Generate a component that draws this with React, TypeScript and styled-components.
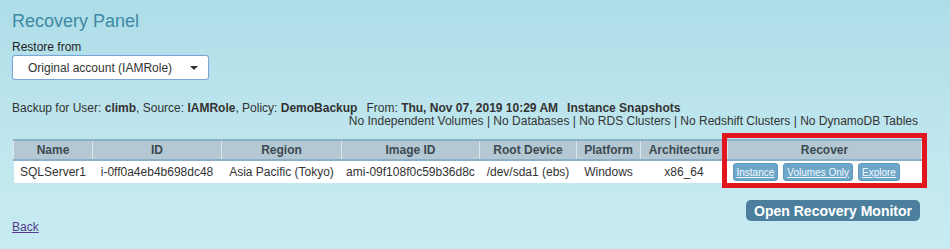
import React from 'react';
import styled, { createGlobalStyle } from 'styled-components';

const GlobalStyle = createGlobalStyle`
  html, body {
    margin: 0;
    padding: 0;
  }
  body {
    font-family: "Liberation Sans", Arial, sans-serif;
    color: #333;
    background: linear-gradient(180deg, #aedde8 0%, #bfe6ee 55%, #c8ebf2 100%);
    min-height: 249px;
  }
`;

const Page = styled.div`
  padding: 10px 29px 0 12px;
  height: 249px;
  box-sizing: border-box;
`;

const Title = styled.h1`
  margin: 0;
  font-size: 18px;
  line-height: 22px;
  font-weight: normal;
  color: #3c8aa4;
`;

const Label = styled.div`
  margin-top: 8px;
  font-size: 12px;
  line-height: 14px;
  color: #222;
`;

const Select = styled.div`
  margin-top: 1px;
  width: 197px;
  height: 25px;
  box-sizing: border-box;
  display: flex;
  align-items: center;
  justify-content: space-between;
  padding: 0 10px 0 15px;
  background: #fff;
  border: 1px solid #7da4d6;
  border-radius: 3px;
  box-shadow: 0 0 1px #9dc0ea;
  font-size: 12px;
  color: #333;
`;

const Caret = styled.span`
  width: 0;
  height: 0;
  border-left: 4px solid transparent;
  border-right: 4px solid transparent;
  border-top: 4px solid #333;
`;

const Info = styled.div`
  margin-top: 22px;
  font-size: 12px;
  line-height: 13px;
  color: #333;
`;

const InfoLine = styled.div<{ $right?: boolean }>`
  text-align: ${({ $right }) => ($right ? 'right' : 'left')};
  padding-right: ${({ $right }) => ($right ? '3px' : '0')};
  white-space: nowrap;
`;

const Gap = styled.span`
  display: inline-block;
  width: 9px;
`;

const Table = styled.table`
  margin-top: 11px;
  margin-left: 1px;
  width: 908px;
  table-layout: fixed;
  border-collapse: collapse;
  font-size: 12px;
`;

const Th = styled.th`
  position: relative;
  height: 18px;
  padding: 0;
  background: #b3c8d3;
  border-top: 2px solid #8aafc9;
  border-bottom: 2px solid #8aafc9;
  border-left: 1px solid #d9e7ee;
  border-right: 1px solid #d9e7ee;
  color: #3d4a52;
  font-weight: bold;
  text-align: center;
`;

const Td = styled.td<{ $left?: boolean }>`
  height: 22px;
  padding: 0 ${({ $left }) => ($left ? '5px' : '0')};
  background: #fff;
  text-align: ${({ $left }) => ($left ? 'left' : 'center')};
  color: #333;
  white-space: nowrap;
`;

const Highlight = styled.div`
  position: absolute;
  left: -6px;
  right: -6px;
  top: -8px;
  bottom: -29px;
  border: 5px solid #e3161d;
  pointer-events: none;
`;

const Actions = styled.div`
  display: flex;
  gap: 5px;
`;

const SmallButton = styled.a`
  display: inline-flex;
  align-items: center;
  height: 16px;
  padding: 0 3px;
  border: 1px solid #5e98bf;
  border-radius: 3px;
  background: #6ea6c9;
  color: #f4fbff;
  font-size: 10px;
  text-decoration: underline;
  cursor: pointer;
`;

const Footer = styled.div`
  display: flex;
  justify-content: flex-end;
  margin-top: 17px;
  padding-right: 1px;
`;

const MonitorButton = styled.button`
  height: 21px;
  padding: 0 8px;
  border: none;
  border-radius: 5px;
  background: #4b7f9d;
  color: #fff;
  font-family: "Liberation Sans", Arial, sans-serif;
  font-size: 14px;
  font-weight: bold;
  cursor: pointer;
`;

const BackLink = styled.a`
  display: block;
  width: max-content;
  margin-top: -1px;
  font-size: 12px;
  line-height: 14px;
  color: #553c8e;
  text-decoration: underline;
`;

const columns = [
  { name: 'Name', width: 79 },
  { name: 'ID', width: 129 },
  { name: 'Region', width: 120 },
  { name: 'Image ID', width: 138 },
  { name: 'Root Device', width: 97 },
  { name: 'Platform', width: 64 },
  { name: 'Architecture', width: 87 },
  { name: 'Recover', width: 194 },
];

const row = [
  'SQLServer1',
  'i-0ff0a4eb4b698dc48',
  'Asia Pacific (Tokyo)',
  'ami-09f108f0c59b36d8c',
  '/dev/sda1 (ebs)',
  'Windows',
  'x86_64',
];

const App = () => (
  <>
    <GlobalStyle />
    <Page>
      <Title>Recovery Panel</Title>
      <Label>Restore from</Label>
      <Select>
        <span>Original account (IAMRole)</span>
        <Caret />
      </Select>
      <Info>
        <InfoLine>
          Backup for User: <b>climb</b>, Source: <b>IAMRole</b>, Policy: <b>DemoBackup</b>
          <Gap />
          From: <b>Thu, Nov 07, 2019 10:29 AM</b>
          <Gap />
          <b>Instance Snapshots</b>
        </InfoLine>
        <InfoLine $right>
          No Independent Volumes | No Databases | No RDS Clusters | No Redshift Clusters | No DynamoDB Tables
        </InfoLine>
      </Info>
      <Table>
        <colgroup>
          {columns.map((c) => (
            <col key={c.name} style={{ width: c.width }} />
          ))}
        </colgroup>
        <thead>
          <tr>
            {columns.map((c) => (
              <Th key={c.name}>
                {c.name}
                {c.name === 'Recover' && <Highlight />}
              </Th>
            ))}
          </tr>
        </thead>
        <tbody>
          <tr>
            {row.map((v) => (
              <Td key={v}>{v}</Td>
            ))}
            <Td $left>
              <Actions>
                <SmallButton>Instance</SmallButton>
                <SmallButton>Volumes Only</SmallButton>
                <SmallButton>Explore</SmallButton>
              </Actions>
            </Td>
          </tr>
        </tbody>
      </Table>
      <Footer>
        <MonitorButton>Open Recovery Monitor</MonitorButton>
      </Footer>
      <BackLink href="#">Back</BackLink>
    </Page>
  </>
);

export default App;
